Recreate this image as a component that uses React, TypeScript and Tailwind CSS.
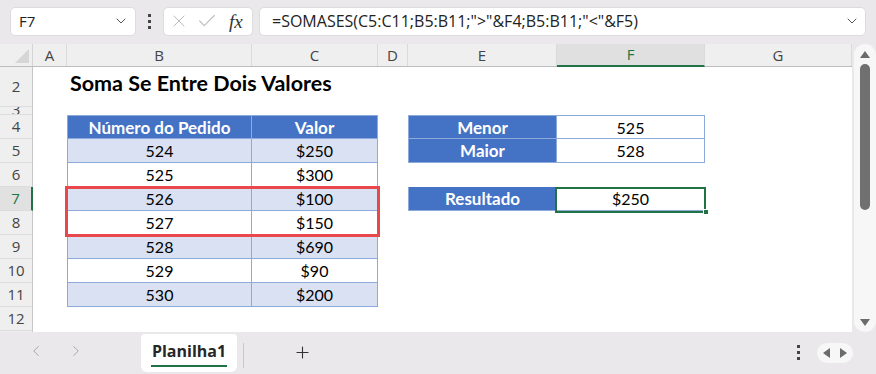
import { ChevronDown, ChevronLeft, ChevronRight, Plus, X, Check } from 'lucide-react';

const ui = { fontFamily: '"Open Sans", "Noto Sans", sans-serif' };
const cell = { fontFamily: 'Lato, "Noto Sans", sans-serif' };

const cols = [
  { key: 'A', w: 'w-[34px]' },
  { key: 'B', w: 'w-[185px]' },
  { key: 'C', w: 'w-[126px]' },
  { key: 'D', w: 'w-[30px]' },
  { key: 'E', w: 'w-[149px]' },
  { key: 'F', w: 'w-[148px]' },
  { key: 'G', w: 'flex-1' },
];

const orders = [
  { n: '524', v: '$250' },
  { n: '525', v: '$300' },
  { n: '526', v: '$100' },
  { n: '527', v: '$150' },
  { n: '528', v: '$690' },
  { n: '529', v: '$90' },
  { n: '530', v: '$200' },
];

const side: Record<number, { label: string; value: string } | undefined> = {
  4: { label: 'Menor', value: '525' },
  5: { label: 'Maior', value: '528' },
  7: { label: 'Resultado', value: '$250' },
};

const Dots = () => (
  <div className="flex flex-col gap-[3px]">
    <span className="w-[3px] h-[3px] bg-[#444]" />
    <span className="w-[3px] h-[3px] bg-[#444]" />
    <span className="w-[3px] h-[3px] bg-[#444]" />
  </div>
);

const RowHead = ({ n, h, selected }: { n: number; h: string; selected?: boolean }) => (
  <div
    className={`w-[33px] ${h} shrink-0 flex items-center justify-center overflow-hidden border-b border-[#dcdcdc] text-[15px] ${
      selected
        ? 'bg-[#e1e1e1] border-r-2 border-r-[#217346] text-[#217346]'
        : 'bg-[#efefef] border-r border-r-[#c6c6c6] text-[#444]'
    }`}
    style={ui}
  >
    {n}
  </div>
);

const TableRow = ({ row, i }: { row: { n: string; v: string }; i: number }) => {
  const band = i % 2 === 0 ? 'bg-[#d9e1f2]' : 'bg-white';
  const s = side[i + 5];
  return (
    <div className="flex h-[24px]">
      <RowHead n={i + 5} h="h-[24px]" selected={i + 5 === 7} />
      <div className="w-[34px]" />
      <div className={`w-[185px] ${band} border-l border-r border-b border-[#8ea9db] flex items-center justify-center pt-[1px] text-[16px] text-black`} style={cell}>
        {row.n}
      </div>
      <div className={`w-[126px] ${band} border-r border-b border-[#8ea9db] flex items-center justify-center pt-[1px] text-[16px] text-black`} style={cell}>
        {row.v}
      </div>
      <div className="w-[30px]" />
      {s ? (
        <>
          <div className="w-[149px] bg-[#4472c4] border border-t-0 border-[#8ea9db] flex items-center justify-center pt-[1px] text-[17px] font-bold text-white" style={cell}>
            {s.label}
          </div>
          <div className="w-[148px] bg-white border-r border-b border-[#8ea9db] flex items-center justify-center pt-[1px] text-[16px] text-black" style={cell}>
            {s.value}
          </div>
        </>
      ) : (
        <div className="w-[297px]" />
      )}
      <div className="flex-1" />
    </div>
  );
};

export default function App() {
  return (
    <div className="w-[876px] h-[374px] bg-[#ebe8eb] flex flex-col overflow-hidden select-none" style={ui}>
      {/* formula bar */}
      <div className="h-[44px] flex items-center pl-[10px] pr-[10px] pb-[2px]">
        <div className="w-[126px] h-[29px] bg-white rounded-[5px] border border-[#dedbde] flex items-center pl-[8px] pr-[6px]">
          <span className="text-[15px] text-[#222] flex-1">F7</span>
          <ChevronDown className="w-[16px] h-[16px] text-[#555]" strokeWidth={1.5} />
        </div>
        <div className="w-[27px] flex justify-center">
          <Dots />
        </div>
        <div className="w-[90px] h-[29px] bg-white rounded-[5px] border border-[#dedbde] flex items-center pl-[5px] pr-[6px] gap-[7px]">
          <X className="w-[20px] h-[20px] text-[#bdbdbd]" strokeWidth={1.2} />
          <Check className="w-[22px] h-[22px] text-[#bdbdbd]" strokeWidth={1.2} />
          <span className="text-[19px] italic text-[#333] leading-none ml-[4px]" style={{ fontFamily: '"Liberation Serif", serif' }}>
            fx
          </span>
        </div>
        <div className="flex-1 ml-[6px] h-[29px] bg-white rounded-[5px] border border-[#dedbde] flex items-center pl-[12px] pr-[5px]">
          <span className="text-[16px] text-[#222] flex-1">=SOMASES(C5:C11;B5:B11;"&gt;"&amp;F4;B5:B11;"&lt;"&amp;F5)</span>
          <ChevronDown className="w-[16px] h-[16px] text-[#555]" strokeWidth={1.5} />
        </div>
      </div>

      {/* sheet + scrollbar */}
      <div className="h-[288px] flex">
        <div className="relative w-[852px] bg-white flex flex-col overflow-hidden">
          {/* column headers */}
          <div className="flex h-[23px] border-b border-[#bdbdbd] bg-[#efefef]">
            <div className="w-[33px] relative border-r border-[#d4d4d4]">
              <div className="absolute right-[3px] bottom-[3px] w-0 h-0 border-l-[14px] border-l-transparent border-b-[14px] border-b-[#d6d6d6]" />
            </div>
            {cols.map((c) => (
              <div
                key={c.key}
                className={`${c.w} flex items-center justify-center text-[15px] border-r border-[#dadada] ${
                  c.key === 'F' ? 'bg-[#e0e0e0] text-[#217346] border-b-2 border-b-[#217346] -mb-[1px]' : 'text-[#444]'
                }`}
              >
                {c.key}
              </div>
            ))}
          </div>

          {/* row 2 title */}
          <div className="flex h-[40px]">
            <RowHead n={2} h="h-[40px]" />
            <div className="w-[34px]" />
            <div className="flex-1 flex items-end pb-[8px] pl-[3px] text-[21.5px] font-bold text-black" style={cell}>
              Soma Se Entre Dois Valores
            </div>
          </div>

          {/* row 3 short */}
          <div className="flex h-[8px]">
            <div className="w-[33px] h-[8px] shrink-0 bg-[#efefef] border-r border-[#c6c6c6] border-b border-b-[#dcdcdc] overflow-hidden relative">
              <span className="absolute left-0 right-0 text-center -top-[9px] text-[15px] leading-[22px] text-[#444]">3</span>
            </div>
          </div>

          {/* row 4 headers */}
          <div className="flex h-[24px]">
            <RowHead n={4} h="h-[24px]" />
            <div className="w-[34px]" />
            <div className="w-[185px] bg-[#4472c4] border border-[#8ea9db] flex items-center justify-center pt-[1px] text-[17px] font-bold text-white" style={cell}>
              Número do Pedido
            </div>
            <div className="w-[126px] bg-[#4472c4] border border-l-0 border-[#8ea9db] flex items-center justify-center pt-[1px] text-[17px] font-bold text-white" style={cell}>
              Valor
            </div>
            <div className="w-[30px]" />
            <div className="w-[149px] bg-[#4472c4] border border-[#8ea9db] flex items-center justify-center pt-[1px] text-[17px] font-bold text-white" style={cell}>
              Menor
            </div>
            <div className="w-[148px] bg-white border border-l-0 border-[#8ea9db] flex items-center justify-center pt-[1px] text-[16px] text-black" style={cell}>
              525
            </div>
          </div>

          {orders.map((row, i) => (
            <TableRow key={i} row={row} i={i} />
          ))}

          {/* row 12 */}
          <div className="flex h-[24px]">
            <RowHead n={12} h="h-[24px]" />
          </div>
          <div className="flex flex-1">
            <div className="w-[33px] bg-[#efefef] border-r border-[#c6c6c6]" />
          </div>

          {/* highlight box rows 7-8 */}
          <div className="absolute left-[65px] top-[142px] w-[315px] h-[51px] border-[3px] border-[#e8474c]" />
          {/* selected cell F7 */}
          <div className="absolute left-[555px] top-[143px] w-[151px] h-[26px] border-2 border-[#217346]" />
          <div className="absolute left-[703px] top-[165px] w-[6px] h-[6px] bg-[#217346] border border-white" />
        </div>

        {/* vertical scrollbar */}
        <div className="w-[24px] pl-[2px]">
          <div className="h-full bg-[#f7f7f7] rounded-t-full rounded-b-full flex flex-col items-center pt-[7px] pb-[6px]">
            <div className="w-0 h-0 border-l-[5px] border-l-transparent border-r-[5px] border-r-transparent border-b-[7px] border-b-[#6b6b6b]" />
            <div className="w-[10px] h-[146px] mt-[6px] bg-[#707070] rounded-full" />
            <div className="flex-1" />
            <div className="w-0 h-0 border-l-[5px] border-l-transparent border-r-[5px] border-r-transparent border-t-[7px] border-t-[#6b6b6b]" />
          </div>
        </div>
      </div>

      {/* sheet tabs */}
      <div className="h-[42px] flex items-start">
        <div className="w-[141px] h-[38px] flex items-center pl-[27px] gap-[22px]">
          <ChevronLeft className="w-[18px] h-[18px] text-[#a6a6a6]" strokeWidth={1.3} />
          <ChevronRight className="w-[18px] h-[18px] text-[#a6a6a6]" strokeWidth={1.3} />
        </div>
        <div className="w-[96px] h-[38px] mt-[2px] bg-white rounded-b-[6px] rounded-t-[4px] flex flex-col items-center pt-[6px]">
          <span className="text-[16px] font-bold text-[#262626] leading-[22px]">Planilha1</span>
          <span className="w-[76px] h-[2px] bg-[#217346] mt-[3px]" />
        </div>
        <div className="w-[1px] h-[25px] bg-[#c8c8c8] ml-[6px] mt-[11px]" />
        <div className="w-[116px] h-[40px] flex items-center justify-center">
          <Plus className="w-[19px] h-[19px] text-[#333]" strokeWidth={1.4} />
        </div>
        <div className="flex-1" />
        <div className="h-[40px] flex items-center">
          <Dots />
        </div>
        <div className="w-[36px] h-[20px] mt-[11px] ml-[17px] mr-[23px] bg-[#f7f7f7] rounded-full flex items-center justify-center gap-[10px]">
          <div className="w-0 h-0 border-t-[5px] border-t-transparent border-b-[5px] border-b-transparent border-r-[7px] border-r-[#6b6b6b]" />
          <div className="w-0 h-0 border-t-[5px] border-t-transparent border-b-[5px] border-b-transparent border-l-[7px] border-l-[#6b6b6b]" />
        </div>
      </div>
    </div>
  );
}
